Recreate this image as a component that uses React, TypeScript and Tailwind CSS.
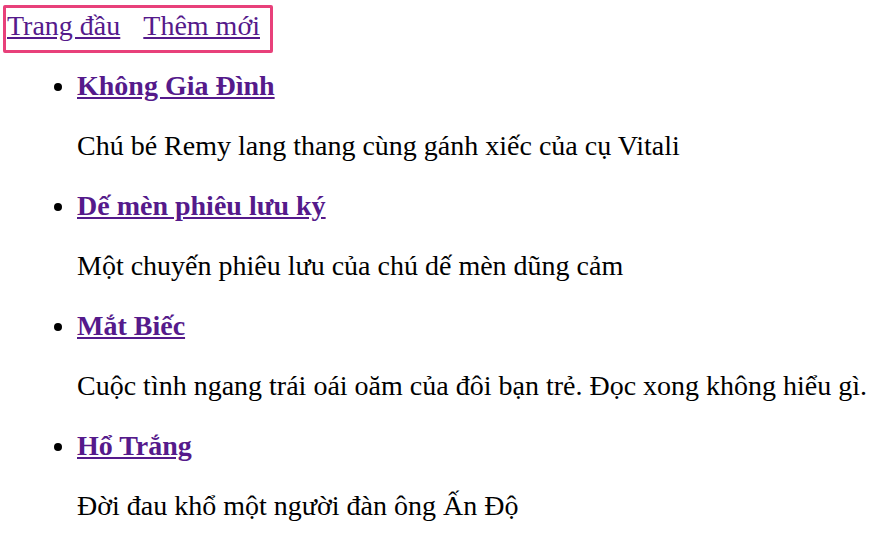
import React from 'react';

interface Book {
  id: number;
  title: string;
  summary: string;
}

const books: Book[] = [
  { id: 1, title: 'Không Gia Đình', summary: 'Chú bé Remy lang thang cùng gánh xiếc của cụ Vitali' },
  { id: 2, title: 'Dế mèn phiêu lưu ký', summary: 'Một chuyến phiêu lưu của chú dế mèn dũng cảm' },
  { id: 3, title: 'Mắt Biếc', summary: 'Cuộc tình ngang trái oái oăm của đôi bạn trẻ. Đọc xong không hiểu gì.' },
  { id: 4, title: 'Hổ Trắng', summary: 'Đời đau khổ một người đàn ông Ấn Độ' },
];

export default function App() {
  return (
    <div className="min-h-screen bg-white text-black font-['Liberation_Serif','Times_New_Roman',serif] text-[28px] leading-[32px]">
      <div className="pl-[3px] pt-[5px]">
        <nav className="inline-flex gap-[23px] border-[3px] border-[#e8407a] rounded-[2px] pl-[1px] pr-[10px] pt-[2px] pb-[8px]">
          <a href="#" className="text-[#551a8b] underline">Trang đầu</a>
          <a href="#" className="text-[#551a8b] underline">Thêm mới</a>
        </nav>
      </div>
      <ul className="list-disc pl-[77px] mt-[17px]">
        {books.map((book) => (
          <li key={book.id}>
            <a href="#" className="font-bold text-[#551a8b] underline">{book.title}</a>
            <p className="my-[28px]">{book.summary}</p>
          </li>
        ))}
      </ul>
    </div>
  );
}
